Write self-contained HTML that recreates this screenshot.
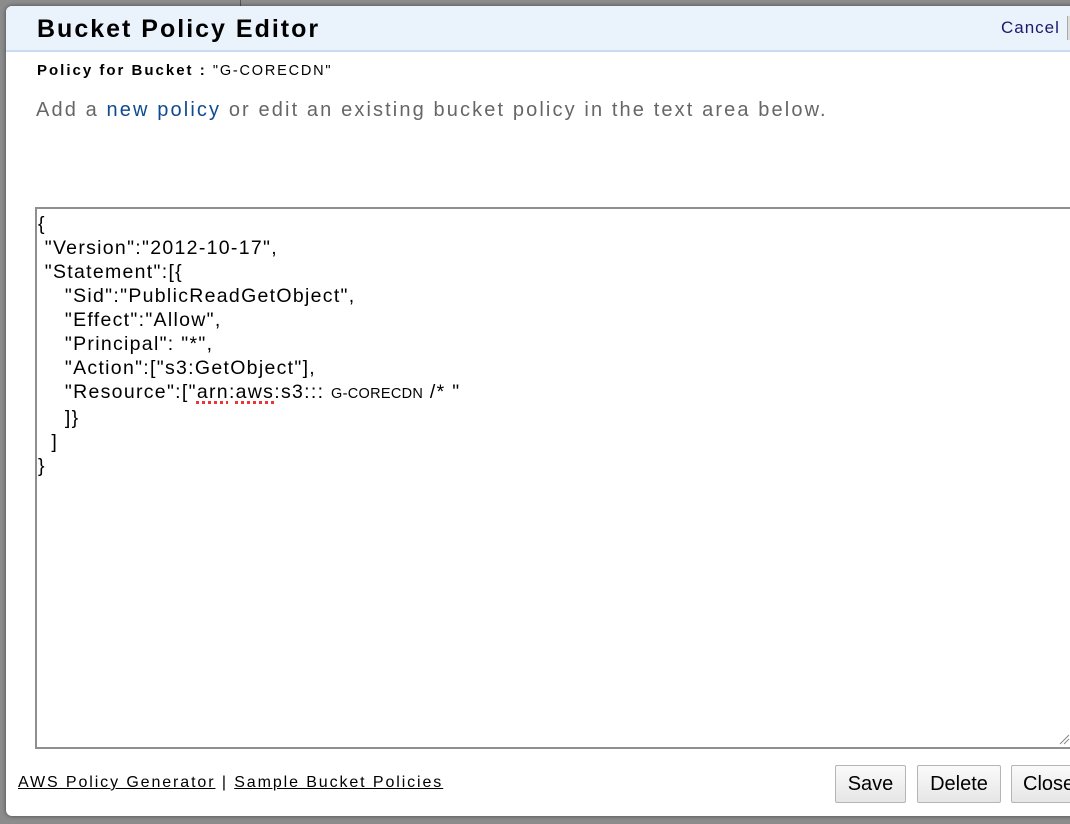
<!DOCTYPE html>
<html><head><meta charset="utf-8"><style>
html,body{margin:0;padding:0;width:1070px;height:824px;overflow:hidden;background:#8c8c8c;font-family:"Liberation Sans",sans-serif;}
.topline{position:absolute;left:240px;top:0;width:1px;height:6px;background:#555;}
.dlg{position:absolute;left:6px;top:6px;width:1070px;height:810px;background:#fff;border-radius:6px 0 0 6px;box-shadow:0 0 4px rgba(0,0,0,.5);}
.hdr{position:absolute;left:0;top:0;width:1064px;height:44px;background:#eaf2fc;border-bottom:2px solid #c8dcf2;border-radius:6px 0 0 0;}
.title{position:absolute;left:31px;top:9px;font-size:25px;font-weight:bold;color:#000;letter-spacing:2px;}
.cancel{position:absolute;left:995px;top:12px;font-size:17px;color:#1a1a6e;letter-spacing:1px;}
.cbar{position:absolute;left:1061px;top:10px;width:3px;height:24px;background:#ddd;border-left:1px solid #aaa;}
.pfb{position:absolute;left:31px;top:56px;font-size:15px;font-weight:bold;letter-spacing:2px;}
.pfb span{font-weight:normal;font-size:14.5px;letter-spacing:1.8px;}
.intro{position:absolute;left:30px;top:93px;font-size:20px;color:#666;letter-spacing:2.12px;}
.intro a{color:#0f4b8f;text-decoration:none;}
.ta{position:absolute;left:35px;top:207px;width:1040px;height:542px;border:2px solid #8f8f8f;border-right:none;box-sizing:border-box;}
.code{position:absolute;left:38px;top:212px;font-size:19.5px;line-height:24px;color:#000;white-space:pre;letter-spacing:1.3px;}
.sq{text-decoration:underline dotted #e33;text-decoration-thickness:3px;text-underline-offset:3px;}
.small{font-size:14.5px;letter-spacing:0.3px;}
.grip{position:absolute;left:1058px;top:733px;}
.links{position:absolute;left:18px;top:774px;font-size:16px;color:#000;letter-spacing:1.9px;}
.links a{color:#000;text-decoration:underline;}
.btn{position:absolute;top:765px;height:38px;border:1px solid #b5b5b5;border-radius:2px;background:linear-gradient(#fafafa,#e6e6e6);font-size:20px;line-height:36px;text-align:center;box-sizing:border-box;}
</style></head><body>
<div class="topline"></div>
<div class="dlg">
<div class="hdr"><div class="title">Bucket Policy Editor</div><div class="cancel">Cancel</div><div class="cbar"></div></div>
<div class="pfb">Policy for Bucket : <span>"G-CORECDN"</span></div>
<div class="intro">Add a <a>new policy</a> or edit an existing bucket policy in the text area below.</div>
</div>
<div class="ta"></div>
<div class="code">{
 "Version":"2012-10-17",
 "Statement":[{
    "Sid":"PublicReadGetObject",
    "Effect":"Allow",
    "Principal": "*",
    "Action":["s3:GetObject"],
    "Resource":["<span class="sq">arn</span>:<span class="sq">aws</span>:s3::: <span class="small">G-CORECDN</span> /* "
    ]}
  ]
}</div>
<svg class="grip" width="12" height="12"><path d="M2 11L11 2M6 11L11 6" stroke="#888" stroke-width="1"/></svg>
<div class="links"><a>AWS Policy Generator</a> | <a>Sample Bucket Policies</a></div>
<div class="btn" style="left:835px;width:71px;">Save</div>
<div class="btn" style="left:917px;width:84px;">Delete</div>
<div class="btn" style="left:1011px;width:70px;text-align:left;padding-left:11px;">Close</div>
</body></html>
